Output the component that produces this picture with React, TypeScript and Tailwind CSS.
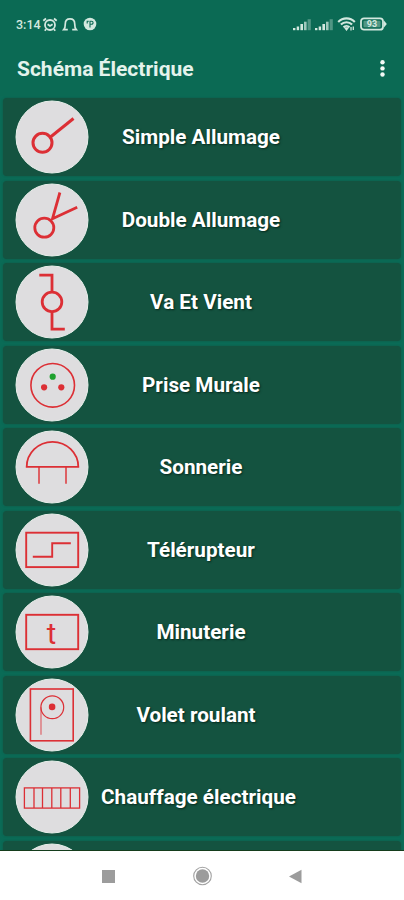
import clsx from "clsx";
import type { ReactNode } from "react";

type Entry = {
  label: string;
  symbol: ReactNode;
  labelClass?: string;
};

const entries: Entry[] = [
  {
    label: "Simple Allumage",
    symbol: (
      <g strokeWidth="3">
        <circle cx="27" cy="42.3" r="9.5" />
        <path d="M35 36.5 58 18" />
      </g>
    ),
  },
  {
    label: "Double Allumage",
    symbol: (
      <g strokeWidth="2.8">
        <circle cx="28.8" cy="44.2" r="9.5" />
        <path d="M44.4 9 37 35.2 61.7 23.7" />
      </g>
    ),
  },
  {
    label: "Va Et Vient",
    symbol: (
      <g strokeWidth="2.8">
        <circle cx="36.5" cy="36.4" r="9.8" />
        <path d="M23.8 9.7H36.5V26.5M36.5 46.5V63.6H49.3" />
      </g>
    ),
  },
  {
    label: "Prise Murale",
    symbol: (
      <g strokeWidth="1.6">
        <circle cx="37.2" cy="36.8" r="21.8" />
        <circle cx="37.2" cy="28.2" r="3.1" fill="#1fa12e" stroke="none" />
        <circle cx="28.6" cy="38.8" r="3.1" fill="#dc2f35" stroke="none" />
        <circle cx="45.8" cy="38.8" r="3.1" fill="#dc2f35" stroke="none" />
      </g>
    ),
  },
  {
    label: "Sonnerie",
    symbol: (
      <g strokeWidth="1.8">
        <path d="M11.2 36.4A25.8 25 0 0 1 62.8 36.4M10.3 36.4H63.7" />
        <path d="M23.5 36.4V53.2M50.5 36.4V53.2" strokeOpacity="0.8" />
      </g>
    ),
  },
  {
    label: "Télérupteur",
    symbol: (
      <g strokeWidth="1.9">
        <rect x="10.7" y="19.2" width="52" height="34.4" />
        <path d="M17.3 43.3H36.7V29.8H55.3" />
      </g>
    ),
  },
  {
    label: "Minuterie",
    symbol: (
      <g strokeWidth="1.9">
        <rect x="10.7" y="19.3" width="52" height="34.4" />
        <text x="36" y="48" textAnchor="middle" fill="#dc2f35" stroke="none" className="font-['Roboto',sans-serif] text-[29px]">
          t
        </text>
      </g>
    ),
  },
  {
    label: "Volet roulant",
    labelClass: "pr-[12px]",
    symbol: (
      <g strokeWidth="1.6">
        <rect x="14.9" y="10.5" width="42.8" height="51.8" />
        <circle cx="36.8" cy="28.8" r="11.4" strokeWidth="1.2" />
        <circle cx="36.6" cy="28.4" r="3.3" fill="#dc2f35" stroke="none" />
        <path d="M25.5 28.8V56.2" strokeWidth="1.4" strokeOpacity="0.6" />
      </g>
    ),
  },
  {
    label: "Chauffage électrique",
    labelClass: "pr-[7px]",
    symbol: (
      <g strokeWidth="1.3">
        <rect x="8.9" y="27.4" width="55.2" height="20.2" />
        <path d="M18.5 27.4V47.6M27 27.4V47.6M36.3 27.4V47.6M45.3 27.4V47.6M54.8 27.4V47.6" />
      </g>
    ),
  },
  { label: "", symbol: null },
];

export default function App() {
  return (
    <div className="flex h-[900px] w-[404px] flex-col overflow-hidden bg-[#0b6a54] font-['Roboto',sans-serif] text-white">
      <StatusBar />
      <header className="flex h-[48px] shrink-0 items-center justify-between pr-[17px] pb-[6px] pl-[17px]">
        <h1 className="text-[21px] leading-6 font-bold text-[#e4f3ec]">Schéma Électrique</h1>
        <svg className="h-[20px] w-[9px]" viewBox="0 0 9 20" fill="#f4faf7">
          <circle cx="4.5" cy="3.3" r="2.2" />
          <circle cx="4.5" cy="9.4" r="2.2" />
          <circle cx="4.5" cy="15.5" r="2.2" />
        </svg>
      </header>

      <main className="min-h-0 flex-1 overflow-hidden border-b border-[#143d1c] bg-[#0a6b56] px-[3px] pt-[2px]">
        <ul className="flex flex-col gap-[4.5px]">
          {entries.map((entry) => (
            <Row key={entry.label} entry={entry} />
          ))}
        </ul>
      </main>

      <NavigationBar />
    </div>
  );
}

function Row({ entry }: { entry: Entry }) {
  return (
    <li className="grid h-[78px] shrink-0 items-center rounded-[4px] bg-[#145340] shadow-[0_0_2px_#145340]">
      <svg className="col-start-1 row-start-1 ml-[12px] h-[74px] w-[74px]" viewBox="-0.5 -0.5 74 74" fill="none" stroke="#dc2f35">
        <circle cx="36.5" cy="36.5" r="36" fill="#dedddf" stroke="#e9efeb" />
        {entry.symbol}
      </svg>
      <span
        className={clsx(
          "col-start-1 row-start-1 pr-[2px] text-center text-[20.7px] leading-6 font-bold [text-shadow:1px_1px_2px_#06291d]",
          entry.labelClass,
        )}
      >
        {entry.label}
      </span>
    </li>
  );
}

function StatusBar() {
  return (
    <div className="flex h-[48px] shrink-0 items-center justify-between pr-[17px] pl-4">
      <div className="flex items-center text-[#d3e8df]">
        <span className="w-[26px] pt-[2px] text-[12.5px] leading-4 font-medium">3:14</span>
        <svg className="h-[15px] w-[16px]" viewBox="0 0 16 15" fill="none" stroke="currentColor" strokeWidth="1.8">
          <circle cx="8" cy="8" r="5" />
          <path d="M1.3 3.8 4 1.5M14.7 3.8 12 1.5M4 12.3 2.8 13.8M12 12.3 13.2 13.8M5.6 7.2 8 9 10.6 7.2" />
        </svg>
        <svg className="ml-[4px] h-[15px] w-[16px]" viewBox="0 0 16 15" fill="none" stroke="currentColor" strokeWidth="1.7">
          <path d="M5.8 12.6H1.8C3.3 11 3.3 9.3 3.3 6.8 3.3 3.8 5.2 1.8 8 1.8S12.7 3.8 12.7 6.8C12.7 9.3 12.7 11 14.2 12.6H10.2" />
        </svg>
        <svg className="ml-[5px] h-[14px] w-[14px]" viewBox="0 0 14 14">
          <circle cx="7" cy="7" r="6.3" fill="currentColor" />
          <path d="M7 10.5V4.2H8.6A1.5 1.5 0 0 1 8.6 7.2H7M4.2 6.5V4.2H5.8" fill="none" stroke="#0b6a54" strokeWidth="1.1" />
        </svg>
      </div>
      <div className="flex items-center text-[#d3e8df]">
        <SignalBars />
        <div className="w-[4px]" />
        <SignalBars />
        <svg className="ml-[4px] h-[14px] w-[19px]" viewBox="0 0 19 14" fill="none" stroke="currentColor" strokeWidth="2.1">
          <path d="M1.2 5C5.8 .2 13.2 .2 17.8 5M3.9 7.6C7 4.4 12 4.4 15.1 7.6M6.5 10.2C8.2 8.5 10.8 8.5 12.5 10.2" />
          <path d="M8 11H11L9.5 13ZM14 10V13.5M16.3 9.5V13" strokeWidth="1.3" />
        </svg>
        <svg className="ml-[4px] h-[14px] w-[27px]" viewBox="0 0 27 14">
          <rect x="1" y="1.3" width="22" height="11.4" rx="3" fill="none" stroke="currentColor" strokeWidth="1.8" />
          <path d="M24 3.5 26.8 7 24 10.5Z" fill="currentColor" />
          <rect x="3.5" y="3.8" width="17" height="6.4" rx="1" fill="currentColor" fillOpacity="0.35" />
          <text x="12" y="10.2" textAnchor="middle" fill="currentColor" className="text-[9px] font-bold">
            93
          </text>
        </svg>
      </div>
    </div>
  );
}

function SignalBars() {
  return (
    <svg className="h-[14px] w-[18px]" viewBox="0 0 18 14" fill="currentColor">
      <rect x="0" y="11" width="2.4" height="2.2" />
      <rect x="3.7" y="9.5" width="2.4" height="3.7" />
      <rect x="7.4" y="7" width="2.6" height="6.2" />
      <rect x="11" y="4.7" width="2.6" height="8.5" opacity="0.75" />
      <rect x="14.6" y="2.2" width="3.2" height="11" opacity="0.35" />
    </svg>
  );
}

function NavigationBar() {
  return (
    <nav className="flex h-[49px] shrink-0 justify-between bg-white pt-[15px] pr-[102px] pl-[102px]">
      <div className="mt-1 h-[13px] w-[13px] bg-[#9c9c9c]" />
      <svg className="h-[20px] w-[20px]" viewBox="0 0 20 20">
        <circle cx="10.5" cy="10" r="8.8" fill="none" stroke="#a2a2a2" strokeWidth="1.1" />
        <circle cx="10.5" cy="10" r="6.7" fill="#9c9c9c" />
      </svg>
      <svg className="mt-[3px] h-[15px] w-[13px]" viewBox="0 0 13 15" fill="#9c9c9c">
        <path d="M0 7.5 12.5 .7V14.3Z" />
      </svg>
    </nav>
  );
}
